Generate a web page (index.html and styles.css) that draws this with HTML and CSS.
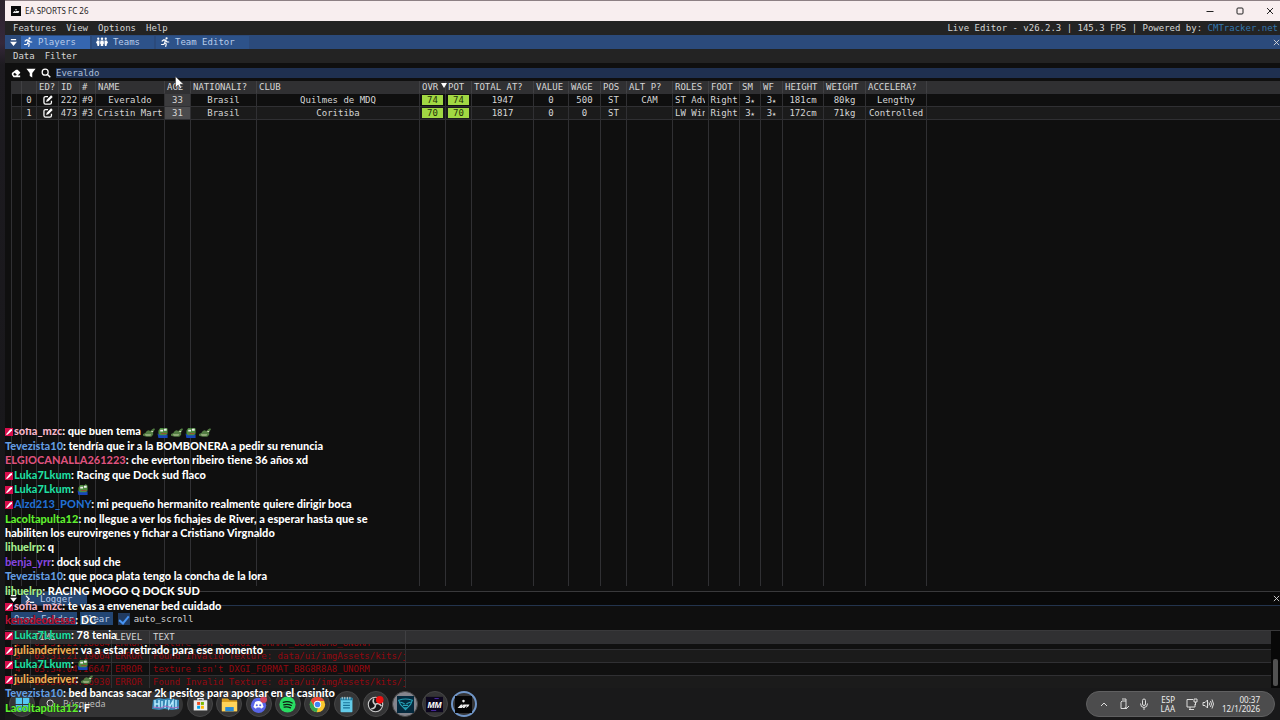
FILE: index.html
```html
<!DOCTYPE html>
<html lang="es">
<head>
<meta charset="utf-8">
<title>EA SPORTS FC 26</title>
<link rel="stylesheet" href="styles.css">
</head>
<body>
<svg class="defs" aria-hidden="true">
  <symbol id="run" viewBox="0 0 16 16"><circle cx="10.500" cy="2" r="1.800" fill="currentColor"/><path d="M3.500 6.500 6 4.500l3 .5-1.500 4 2.500 2-.8 4M7.500 9.500 6 12H2.500M9.500 6l1.800 2H14" fill="none" stroke="currentColor" stroke-width="1.900" stroke-linecap="round" stroke-linejoin="round"/></symbol>
  <symbol id="people" viewBox="0 0 24 18"><g fill="currentColor"><circle cx="4.500" cy="2.500" r="2.300"/><circle cx="12" cy="2.500" r="2.500"/><circle cx="19.500" cy="2.500" r="2.300"/><path d="M2 6h5v6l-1 5H3l-1-5-2-1zM9 6h6l1 6-1.500 1v4h-5v-4L8 12zM17 6h5l2 5-2 1-1 5h-3l-1-5z"/></g></symbol>
  <symbol id="edit" viewBox="0 0 16 16"><path d="M8 2.500H4A2.500 2.500 0 0 0 1.500 5v7A2.500 2.500 0 0 0 4 14.500h7a2.500 2.500 0 0 0 2.500-2.500V9" fill="none" stroke="currentColor" stroke-width="2"/><path d="m5 11 1-3.500L13 .5 15.500 3 8.500 10z" fill="currentColor"/></symbol>
  <symbol id="badge" viewBox="0 0 8 8"><path d="M0 0h8v8H0z" fill="#d80d4c"/><path d="M1 6.500 3 4l2-2.500 2-.5v1.500L4.500 5 2 7z" fill="#fff"/></symbol>
  <symbol id="croc" viewBox="0 0 13 9"><path d="M0 6c2 0 3-1 4-3l2-1 2 1 2-2 2-1 1 1-2 3v3l-2 2H4L0 8z" fill="#527c42"/><path d="M2 6.500h7L8 8H3z" fill="#a5b98a"/><path d="M9 3h2v1H9z" fill="#e5e8ce"/></symbol>
  <symbol id="frog" viewBox="0 0 12 12"><path d="M1 4 3 1h3l1 1 2-2 2 2v5l-2 3H3L1 8z" fill="#4d8b3e"/><path d="M3 3h3v2H3zM7 2h3v2H7z" fill="#eee"/><path d="M4 6.500h6v1H4z" fill="#9d4934"/><path d="M0 7l3 2h6l2-1v4H1z" fill="#1747b8"/></symbol>
</svg>

<div class="screen">
<div class="window">
  <header class="titlebar">
    <svg class="app" viewBox="0 0 12 12"><path d="M0 0h12v12H0z" fill="#090909"/><path d="M2 8.500 4 6h1l-.5 1.500L6 6h4L9 8.500zM5 4h2v1H5z" fill="#eee"/></svg>
    <h1>EA SPORTS FC 26</h1>
    <div class="controls">
      <button aria-label="Minimize"><svg viewBox="0 0 8 8"><path d="M.5 4.500h7"/></svg></button>
      <button aria-label="Maximize"><svg viewBox="0 0 8 8"><rect x="1" y="1" width="6" height="6" rx="1"/></svg></button>
      <button aria-label="Close"><svg viewBox="0 0 8 8"><path d="m1 1 6 6M7 1 1 7"/></svg></button>
    </div>
  </header>
  <nav class="menubar">
    <button>Features</button><button>View</button><button>Options</button><button>Help</button>
    <p>Live Editor - v26.2.3 | 145.3 FPS | Powered by: <a href="#">CMTracker.net</a></p>
  </nav>
  <div class="tabs">
    <button class="fold" aria-label="Tab list"><svg viewBox="0 0 8 8"><path d="M1 0h6v1.500H1zM0 3h8L4 8z" fill="currentColor"/></svg></button>
    <button class="tab current"><svg><use href="#run"/></svg>Players</button>
    <button class="tab teams"><svg><use href="#people"/></svg>Teams</button>
    <button class="tab editor"><svg><use href="#run"/></svg>Team Editor</button>
    <button class="close" aria-label="Close tab"><svg viewBox="0 0 8 8"><path d="m1 1 6 6M7 1 1 7" stroke="currentColor"/></svg></button>
  </div>
  <nav class="submenu"><button>Data</button><button>Filter</button></nav>
  <div class="search">
    <button aria-label="Clear"><svg viewBox="0 0 12 10"><path d="m1 5 5-4h2l3 3v1L8 8h3v2H3L1 7z" fill="currentColor"/><path d="m3 6 1.500-1.300L7 7 6 8H4L3 7z" fill="#111"/></svg></button>
    <button aria-label="Filter"><svg viewBox="0 0 12 12"><path d="M.5 1h11L7.500 6v5.500l-3-2V6z" fill="currentColor"/></svg></button>
    <label for="q"><svg viewBox="0 0 12 12"><circle cx="5" cy="5" r="3.600" fill="none" stroke="currentColor" stroke-width="1.500"/><path d="m7.700 7.700 3.500 3.500" stroke="currentColor" stroke-width="1.700"/></svg></label>
    <input id="q" type="text" value="Everaldo" aria-label="Search players">
  </div>
  <main class="players">
    <table>
      <colgroup><col class="w11"><col class="w15"><col class="w22"><col class="w21"><col class="w16"><col class="w69"><col class="w26"><col class="w66"><col class="w163"><col class="w26"><col class="w26"><col class="w62"><col class="w35"><col class="w32"><col class="w26"><col class="w46"><col class="w36"><col class="w31"><col class="w21"><col class="w22"><col class="w41"><col class="w42"><col class="w61"><col></colgroup>
      <thead><tr><th></th><th></th><th>ED?</th><th>ID</th><th>#</th><th>NAME</th><th>AGE</th><th>NATIONALI?</th><th>CLUB</th><th class="sorted">OVR</th><th>POT</th><th>TOTAL AT?</th><th>VALUE</th><th>WAGE</th><th>POS</th><th>ALT P?</th><th>ROLES</th><th>FOOT</th><th>SM</th><th>WF</th><th>HEIGHT</th><th>WEIGHT</th><th>ACCELERA?</th><th></th></tr></thead>
      <tbody>
        <tr><td></td><td>0</td><td><svg><use href="#edit"/></svg></td><td>222</td><td>#9</td><td>Everaldo</td><td class="age">33</td><td>Brasil</td><td>Quilmes de MDQ</td><td><b>74</b></td><td><b>74</b></td><td>1947</td><td>0</td><td>500</td><td>ST</td><td>CAM</td><td><div class="cut">ST Adv</div></td><td>Right</td><td>3<small>★</small></td><td>3<small>★</small></td><td>181cm</td><td>80kg</td><td>Lengthy</td><td></td></tr>
        <tr><td></td><td>1</td><td><svg><use href="#edit"/></svg></td><td>473</td><td>#3</td><td>Cristin Mart</td><td class="age">31</td><td>Brasil</td><td>Coritiba</td><td><b>70</b></td><td><b>70</b></td><td>1817</td><td>0</td><td>0</td><td>ST</td><td></td><td><div class="cut">LW Win</div></td><td>Right</td><td>3<small>★</small></td><td>3<small>★</small></td><td>172cm</td><td>71kg</td><td>Controlled</td><td></td></tr>
        <tr class="rest"><td></td><td></td><td></td><td></td><td></td><td></td><td></td><td></td><td></td><td></td><td></td><td></td><td></td><td></td><td></td><td></td><td></td><td></td><td></td><td></td><td></td><td></td><td></td><td></td></tr>
      </tbody>
    </table>
  </main>
  <section class="logger">
    <div class="logtabs">
      <button class="fold" aria-label="Logger tabs"><svg viewBox="0 0 8 8"><path d="M1 0h6v1.500H1zM0 3h8L4 8z" fill="currentColor"/></svg></button>
      <button class="tab"><svg viewBox="0 0 12 10"><path d="m1 1 4 4-4 4M6 9h5" fill="none" stroke="currentColor" stroke-width="1.500"/></svg>Logger</button>
      <button class="close" aria-label="Close logger"><svg viewBox="0 0 8 8"><path d="m1 1 6 6M7 1 1 7" stroke="currentColor"/></svg></button>
    </div>
    <div class="logtools">
      <button>Open Folder</button><button>Clear</button>
      <label><input type="checkbox" checked>auto_scroll</label>
    </div>
    <div class="logview">
      <div class="logscroll">
      <table>
        <colgroup><col class="w20"><col class="w81"><col class="w38"><col class="w256"><col></colgroup>
        <thead><tr><th></th><th>TIME</th><th>LEVEL</th><th>TEXT</th><th></th></tr></thead>
        <tbody>
          <tr class="partial"><td><div>2</div></td><td><div>03:31:21.186647</div></td><td><div>ERROR</div></td><td><div>texture isn't DXGI_FORMAT_B8G8R8A8_UNORM</div></td><td></td></tr>
          <tr><td>3</td><td>03:31:21.196649</td><td>ERROR</td><td>Found Invalid Texture: data/ui/imgAssets/kits/j</td><td></td></tr>
          <tr><td>4</td><td>03:34:04.166473</td><td>ERROR</td><td>texture isn't DXGI_FORMAT_B8G8R8A8_UNORM</td><td></td></tr>
          <tr><td>5</td><td>03:34:04.169303</td><td>ERROR</td><td>Found Invalid Texture: data/ui/imgAssets/kits/j</td><td></td></tr>
        </tbody>
      </table>
      </div>
      <div class="scrollbar"><i></i></div>
    </div>
  </section>
  <footer class="taskbar">
    <button class="round" aria-label="Inicio"><svg viewBox="0 0 20 20"><path d="M2 2h7.500v7.500H2zM10.500 2H18v7.500h-7.500zM2 10.500h7.500V18H2zM10.500 10.500H18V18h-7.500z" fill="#54c7f2"/></svg></button>
    <label class="find"><svg viewBox="0 0 12 12"><circle cx="5" cy="5" r="3.800" fill="none" stroke="#ddd" stroke-width="1.200"/><path d="m8 8 3 3" stroke="#ddd"/></svg><input type="text" placeholder="Búsqueda">
      <svg class="doodle" viewBox="0 0 28 14"><path d="M1 3 7 1l5 1 6-1 9 2v9l-7 1-8-1-5 1-7-1z" fill="#3787b5"/><path d="M3 3v8M7 3v8M3 7h4M10 4v7M14 3l-1 8M17 3v8l4-7v7M24 3v9" stroke="#b8ecff" fill="none" stroke-width="1.500"/><path d="M1 10l8 1 4-2 8 2 6-1" stroke="#a466bd" fill="none"/></svg></label>
    <div class="apps">
    <button class="round" aria-label="Store"><svg viewBox="0 0 20 20"><path d="M2 5h16v12H2z" fill="#eee"/><path d="M7 5V3h6v2" fill="none" stroke="#eee" stroke-width="1.500"/><path d="M6 7h3.500v3.500H6z" fill="#ef5022"/><path d="M10.500 7H14v3.500h-3.500z" fill="#7bb900"/><path d="M6 11.500h3.500V15H6z" fill="#00a2eb"/><path d="M10.500 11.500H14V15h-3.500z" fill="#ffb600"/></svg></button>
    <button class="round" aria-label="Explorer"><svg viewBox="0 0 20 20"><path d="M1 3h7l2 2h9v13H1z" fill="#dca01e"/><path d="M1 7h18v11H1z" fill="#ffd45a"/><path d="M5 13h10v5H5z" fill="#288ad6"/></svg></button>
    <button class="round" aria-label="Discord"><svg viewBox="0 0 20 20"><circle cx="10" cy="11" r="9" fill="#5865e8"/><path d="M6 7q4-2 8 0l2 6-3 2-1-1.500H8L7 15l-3-2z" fill="#fff"/><circle cx="8" cy="11" r="1.200" fill="#5865e8"/><circle cx="12" cy="11" r="1.200" fill="#5865e8"/><circle cx="16" cy="4" r="4" fill="#d3455c"/></svg></button>
    <button class="round" aria-label="Spotify"><svg viewBox="0 0 20 20"><circle cx="10" cy="10" r="9.500" fill="#28dc62"/><path d="M5 7.500q5-2 10.500.7M5.500 10.500q5-1.500 9 .7M6 13.200q4-1 7.500.7" stroke="#101a12" fill="none" stroke-width="1.500" stroke-linecap="round"/></svg></button>
    <button class="round" aria-label="Chrome"><svg viewBox="0 0 20 20"><circle cx="10" cy="10" r="9" fill="#f9c62e"/><path d="M2 5.500A9 9 0 0 1 18 6h-8l-4 6z" fill="#e74436"/><path d="M2 5.500 6.500 13l4 1L9 19A9 9 0 0 1 2 5.500z" fill="#34a853"/><circle cx="10" cy="10" r="4.300" fill="#fff"/><circle cx="10" cy="10" r="3.300" fill="#4285f4"/></svg></button>
    <button class="round" aria-label="Notepad"><svg viewBox="0 0 20 20"><rect x="3" y="2" width="14" height="17" rx="1" fill="#63cbe8"/><path d="M3 2h14v3H3z" fill="#197ba1"/><path d="M6 8h8M6 11h8M6 14h8" stroke="#167398" stroke-width="1.300"/><path d="M5 1v3M8 1v3M11 1v3M14 1v3" stroke="#ddd"/></svg></button>
    <button class="round" aria-label="OBS"><svg viewBox="0 0 20 20"><circle cx="10" cy="10" r="8.500" fill="#17171a" stroke="#ccc" stroke-width="1.300"/><path d="M8 3q-2 5 2 7M10 10q4-3 7 2M10 10q0 5-5 5" fill="none" stroke="#ccc" stroke-width="1.800"/><circle cx="15" cy="4.500" r="4.500" fill="#ee1111"/></svg></button>
    <button class="round light" aria-label="Live Editor"><svg viewBox="0 0 20 20"><path d="M0 0h20v20H0z" fill="#05293d"/><path d="M2 5q8-3 16 0l-2 5-6 6-6-6zM4 7l5 2M16 7l-5 2M7 11h6M8 14h4" fill="none" stroke="#26a3b9" stroke-width="1.300"/></svg></button>
    <button class="round" aria-label="MM"><svg viewBox="0 0 20 20"><path d="M0 1h20v18H0z" fill="#0c061d"/><text x="10" y="14" class="mm">MM</text><path d="M10 3h5M6 17h6" stroke="#5931bd"/></svg></button>
    <button class="round active" aria-label="EA SPORTS FC"><svg viewBox="0 0 20 20"><path d="M0 0h20v20H0z" fill="#050505"/><path d="m3 14 4-4h2l-1 2 2-2h7l-1 2-3 2 1-3-3 3H9l1-2-2 2z" fill="#eee"/><circle cx="10" cy="6" r="1.500" fill="#eee"/></svg></button>
    </div>
    <div class="tray">
      <svg viewBox="0 0 12 12"><path d="m3 8 3-3 3 3"/></svg>
      <svg viewBox="0 0 12 12"><path d="M4 3h4v7.500H3V4l1-1zM4 1h4v2M7 9l1 2 3-3"/></svg>
      <svg viewBox="0 0 12 12"><rect x="4.500" y="1" width="3" height="6.500" rx="1.500"/><path d="M2.500 5.500q0 4 3.500 4t3.500-4M6 9.500V12"/></svg>
      <span class="lang">ESP<br>LAA</span>
      <div class="quick"><svg viewBox="0 0 12 12"><path d="M7 1.500H1V9h8V6M3 11.500h5M4 9v2M8 1h3v3H8zM9.500 4v3"/></svg><svg viewBox="0 0 12 12"><path d="M1 4.500h2L5.500 2v8L3 7.500H1zM7 4.500q1 1.500 0 3M8.500 3q2 3 0 6M10 1.500q3 4.500 0 9"/></svg></div>
      <time>00:37<br>12/1/2026</time>
    </div>
  </footer>
</div>

<aside class="chat">
  <p class="first"><svg><use href="#badge"/></svg><b class="c-pink">sofia_mzc</b>: que buen tema <svg class="emo"><use href="#croc"/></svg><svg class="emo"><use href="#frog"/></svg><svg class="emo"><use href="#croc"/></svg><svg class="emo"><use href="#frog"/></svg><svg class="emo"><use href="#croc"/></svg></p>
  <p><b class="c-sky">Tevezista10</b>: tendría que ir a la BOMBONERA a pedir su renuncia</p>
  <p><b class="c-rose">ELGIOCANALLA261223</b>: che everton ribeiro tiene 36 años xd</p>
  <p><svg><use href="#badge"/></svg><b class="c-mint">Luka7Lkum</b>: Racing que Dock sud flaco</p>
  <p><svg><use href="#badge"/></svg><b class="c-mint">Luka7Lkum</b>: <svg class="emo"><use href="#frog"/></svg></p>
  <p><svg><use href="#badge"/></svg><b class="c-blue">Alzd213_PONY</b>: mi pequeño hermanito realmente quiere dirigir boca</p>
  <p class="long"><b class="c-lime">Lacoltapulta12</b>: no llegue a ver los fichajes de River, a esperar hasta que se<br>habiliten los eurovirgenes y fichar a Cristiano Virgnaldo</p>
  <p><b class="c-pale">lihuelrp</b>: q</p>
  <p><b class="c-violet">benja_yrr</b>: dock sud che</p>
  <p><b class="c-sky">Tevezista10</b>: que poca plata tengo la concha de la lora</p>
  <p><b class="c-pale">lihuelrp</b>: RACING MOGO Q DOCK SUD</p>
  <p><svg><use href="#badge"/></svg><b class="c-pink">sofia_mzc</b>: te vas a envenenar bed cuidado</p>
  <p><b class="c-red">kenodeodessa</b>: DC</p>
  <p><svg><use href="#badge"/></svg><b class="c-mint">Luka7Lkum</b>: 78 tenia</p>
  <p><svg><use href="#badge"/></svg><b class="c-gold">julianderiver</b>: va a estar retirado para ese momento</p>
  <p><svg><use href="#badge"/></svg><b class="c-mint">Luka7Lkum</b>: <svg class="emo"><use href="#frog"/></svg></p>
  <p><svg><use href="#badge"/></svg><b class="c-gold">julianderiver</b>: <svg class="emo"><use href="#croc"/></svg></p>
  <p><b class="c-sky">Tevezista10</b>: bed bancas sacar 2k pesitos para apostar en el casinito</p>
  <p><b class="c-lime">Lacoltapulta12</b>: F</p>
</aside>
<svg class="cursor" viewBox="0 0 9 13"><path d="M.5.5v11l2.700-2.500L5 12.500l1.500-.8L5 8.300h3.500z" fill="#fff" stroke="#333" stroke-width=".5"/></svg>
</div>
</body>
</html>
```
FILE: styles.css
```css
* { box-sizing: border-box; }
body { margin: 0; background: #1b171c; color: #d6d6d6; font: 9px/12px "DejaVu Sans Mono", monospace; }
button, input { font: inherit; color: inherit; background: none; border: 0; padding: 0; margin: 0; }
button { white-space: nowrap; }
svg { display: block; flex: none; }
.defs { position: absolute; width: 0; height: 0; }
.screen { position: relative; height: 100vh; overflow: hidden; padding-left: 5px; background: linear-gradient(#2c242c, #35283a 6%, #1d1b20 9%, #151517); }
.window { height: 100%; display: flex; flex-direction: column; background: #0f0f0f; border-top: 1px solid #8d8084; }
.titlebar { flex: none; height: 20px; display: flex; align-items: center; padding: 0 0 1px 6px; background: #f8eeef; color: #272324; }
.app { width: 10px; height: 10px; }
h1 { margin: 0 0 0 4px; font: 8px/12px "Noto Sans", sans-serif; flex: 1; }
.controls { display: flex; gap: 22px; padding-right: 6px; }
.controls svg { width: 8px; height: 8px; stroke: #222; fill: none; }
.menubar, .submenu { flex: none; display: flex; gap: 10px; align-items: center; padding-left: 8px; background: #232323; }
.menubar { height: 14px; }
.menubar p { margin: 0 2px 0 auto; white-space: nowrap; }
a { color: #3477ad; text-decoration: none; }
.tabs { flex: none; height: 14px; display: flex; align-items: center; padding-left: 4px; background: #2b4a7b; }
.fold { width: 12px; padding-left: 1px; }
.fold svg { width: 7px; height: 7px; color: #fff; }
.tab { height: 13px; display: flex; align-items: center; gap: 5px; padding: 0 14px 0 2px; background: #2d5289; color: #b9cce9; }
.tab svg { width: 10px; height: 10px; color: #fff; }
.tab.current { background: #3566b0; }
.tab.teams { margin-left: 2px; padding: 0 14px 0 4px; }
.teams svg { width: 12px; }
.tab.editor { padding-left: 4px; margin-left: 2px; }
.close { margin-left: auto; color: #ddd; }
.close svg { width: 7px; height: 7px; }
.submenu { height: 14px; }
.search { flex: none; height: 18px; display: flex; align-items: center; padding: 2px 0 0 6px; gap: 5px; }
.search svg { width: 10px; height: 10px; color: #fff; }
.search input { flex: 1; min-width: 0; height: 10px; background: #1f3050; color: #aebfd6; padding: 0; }
.players { flex: 1; min-height: 0; padding: 0 0 5px 6px; }
table { width: 100%; border-collapse: separate; border-spacing: 0; table-layout: fixed; }
.players table { height: 100%; }
th, td { height: 13px; padding: 0; border-right: 1px solid #303033; border-bottom: 1px solid #303033; white-space: nowrap; text-align: center; overflow: hidden; line-height: 12px; }
th { background: #303032; font-weight: normal; text-align: left; padding-left: 2px; border-right-color: #404043; }
td:first-child { border-left: 1px solid #303033; }
th:last-child, td:last-child { border-right: 0; }
tbody tr:nth-child(2) td { background: #1b1b1b; }
td svg { width: 10px; height: 10px; margin: 0 auto; color: #fff; }
tbody .age { background: #3c3c3e; }
tbody tr:nth-child(2) .age { background: #4b4b4d; }
td b { display: block; margin: 0 2px; height: 10px; line-height: 10px; font-weight: normal; background: #a1d843; color: #233209; }
small { font-size: 7px; line-height: 7px; }
.cut { text-align: left; margin: 0 3px 0 2px; overflow: hidden; }
.rest td { height: auto; border-bottom: 0; }
.sorted { position: relative; overflow: visible; }
.sorted::after { content: ""; position: absolute; right: -2px; top: 2px; border: 3px solid transparent; border-top: 5px solid #fff; border-bottom: 0; }
.w11 { width: 11px; } .w15 { width: 15px; } .w16 { width: 16px; } .w20 { width: 20px; } .w21 { width: 21px; } .w22 { width: 22px; }
.w26 { width: 26px; } .w31 { width: 31px; } .w32 { width: 32px; } .w35 { width: 35px; } .w36 { width: 36px; } .w38 { width: 38px; }
.w41 { width: 41px; } .w42 { width: 42px; } .w46 { width: 46px; } .w61 { width: 61px; } .w62 { width: 62px; } .w66 { width: 66px; }
.w69 { width: 69px; } .w81 { width: 81px; } .w163 { width: 163px; } .w256 { width: 256px; }
.logger { flex: none; border-top: 1px solid #39393b; }
.logtabs { height: 14px; display: flex; align-items: center; padding-left: 4px; background: #090909; border-bottom: 1px solid #23344d; }
.logtabs .tab { background: #254673; padding-left: 4px; }
.logtools { display: flex; align-items: center; gap: 3px; height: 24px; padding: 1px 0 0 6px; }
.logtools button { background: #234674; color: #b9cce9; padding: 0 3px; height: 13px; }
.logtools label { display: flex; align-items: center; gap: 4px; margin-left: 2px; }
.logtools input { appearance: none; width: 12px; height: 12px; background: #213b61; display: grid; place-items: center; }
.logtools input:checked::before { content: ""; width: 4px; height: 8px; border: solid #4794f5; border-width: 0 2px 2px 0; transform: rotate(40deg); }
.logview { display: flex; height: 58px; padding-left: 6px; border-top: 1px solid #39393b; }
.logscroll { flex: 1; min-width: 0; overflow: hidden; }
.logview th { padding-left: 3px; }
.logview td { color: #95070f; text-align: left; padding-left: 3px; }
.logview tr:nth-child(even) td { background: #1b1b1b; }
.logview tr:nth-child(odd) td { background: #101010; }
.logview .partial td { height: 6px; }
.partial div { height: 5px; overflow: hidden; display: flex; align-items: flex-end; }
.scrollbar { width: 9px; display: flex; align-items: flex-end; padding: 0 2px 2px; background: #080808; }
.scrollbar i { width: 5px; height: 27px; background: #515151; border-radius: 2px; }
.taskbar { flex: none; height: 32px; display: flex; align-items: center; gap: 4px; padding: 0 5px 0 4px; background: #19191a; }
.apps { flex: none; width: 290px; display: flex; justify-content: space-between; }
.round { width: 26px; height: 26px; flex: none; display: grid; place-items: center; border-radius: 50%; background: #353536; border: 1px solid #464647; }
.round svg { width: 17px; height: 17px; }
.light { background: #85858d; }
.active { border: 2px solid #7096c8; }
.mm { font: italic bold 10px "Liberation Sans", sans-serif; fill: #fff; text-anchor: middle; }
.find { display: flex; align-items: center; width: 144px; height: 25px; border-radius: 13px; background: #343435; padding: 0 3px 0 7px; gap: 7px; font: 9px/14px "Noto Sans", sans-serif; }
.find svg { width: 10px; height: 10px; }
.find input { flex: 1; min-width: 0; }
.find input::placeholder { color: #bbb; }
.find .doodle { width: 28px; height: 14px; }
.tray { margin-left: auto; height: 26px; display: flex; align-items: center; border-radius: 13px; border: 1px solid #606061; background: #4c4c4d; padding: 0 14px 0 11px; gap: 8px; color: #eee; font: 8px/9px "Noto Sans", sans-serif; text-align: right; }
.tray svg { width: 12px; height: 12px; fill: none; stroke: #ddd; stroke-width: 1; }
.quick { display: flex; gap: 4px; margin-left: 3px; }
.lang { margin-left: 3px; }
.chat { position: absolute; left: 5px; top: 428px; bottom: 5px; width: 370px; display: flex; flex-direction: column; justify-content: space-between; color: #fff; font: 900 11px/14px Lato, sans-serif; text-shadow: 0 0 1px #000; }
.chat p { margin: 0; height: 14px; white-space: nowrap; }
.chat .long { height: 28px; }
.chat .first { height: 10px; overflow: hidden; display: flex; align-items: flex-end; white-space: pre; }
.chat b { font-weight: 900; }
.chat svg { display: inline-block; width: 8px; height: 8px; vertical-align: -1px; margin-right: 1px; }
.chat .emo { width: 12px; height: 11px; vertical-align: -2px; margin-right: 2px; }
.chat .first svg { margin-bottom: 2px; }
.chat .first .emo { margin-bottom: 0; }
.c-pink { color: #f5b5c9; } .c-sky { color: #659de0; } .c-rose { color: #dc527d; } .c-mint { color: #21dda0; }
.c-blue { color: #246fd0; } .c-lime { color: #60ed31; } .c-pale { color: #a8ee91; } .c-violet { color: #8547dd; }
.c-red { color: #b91539; } .c-gold { color: #edae55; }
.cursor { position: absolute; left: 175px; top: 76px; width: 9px; height: 13px; }
```
